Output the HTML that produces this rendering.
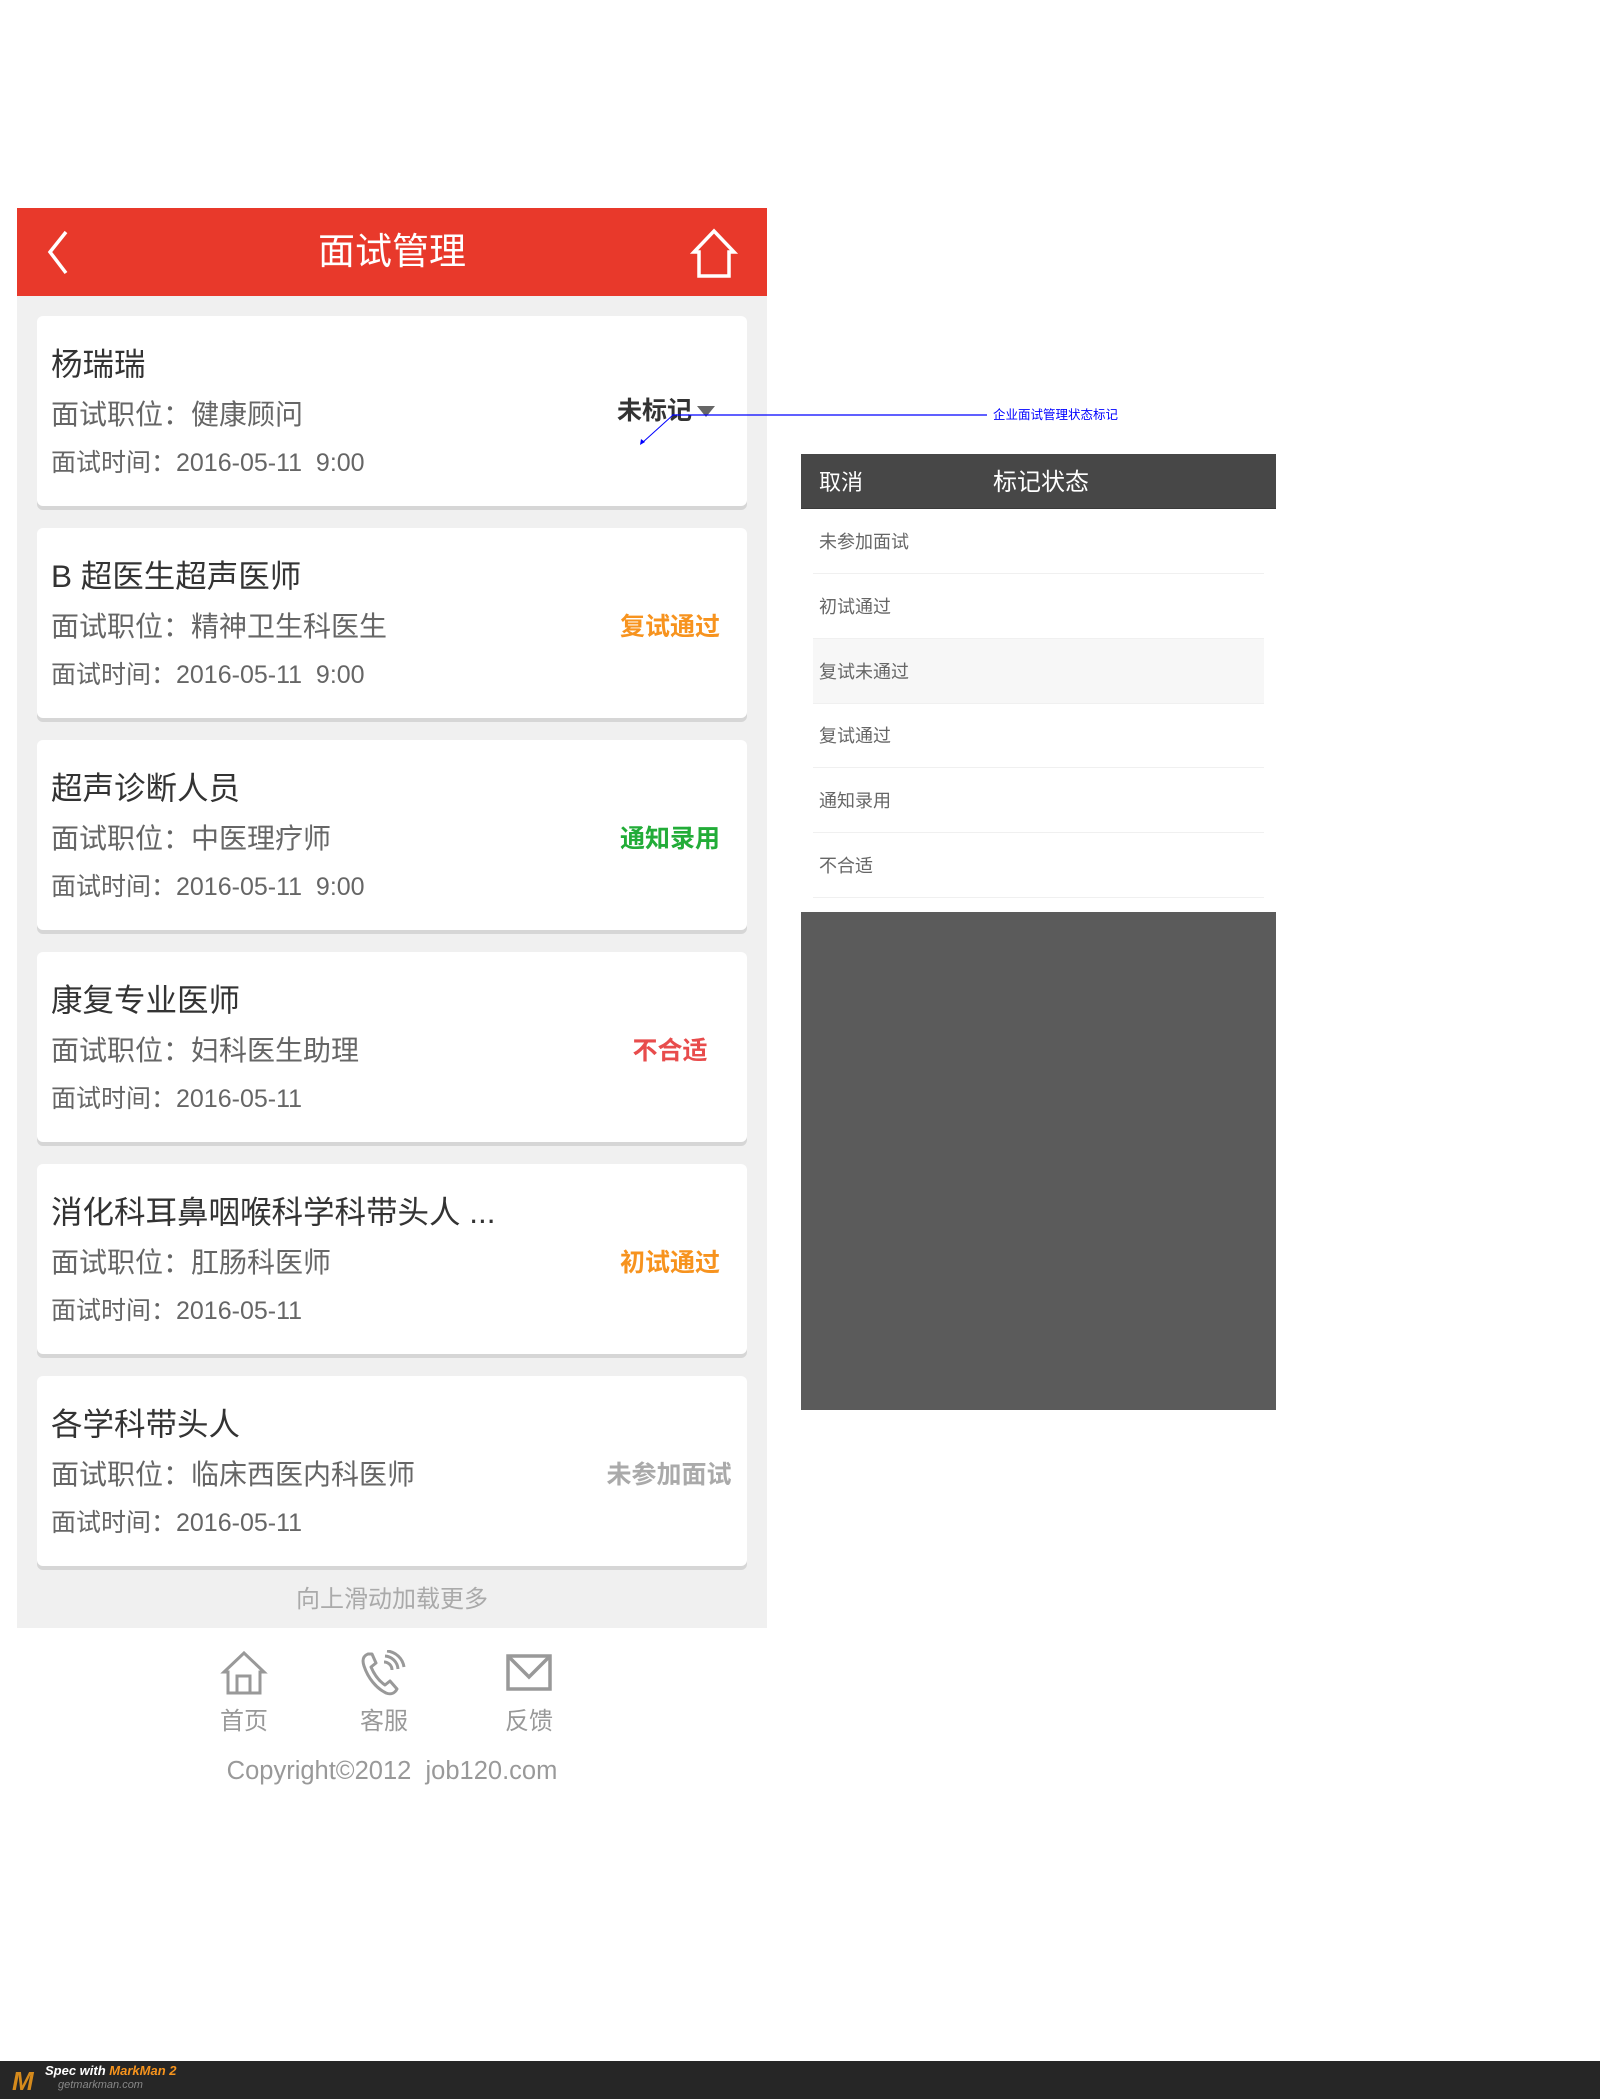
<!DOCTYPE html>
<html><head><meta charset="utf-8">
<style>
*{margin:0;padding:0;box-sizing:border-box}
body{width:1600px;height:2099px;background:#fff;position:relative;overflow:hidden;font-family:"Liberation Sans","Noto Sans CJK SC",sans-serif}
.abs{position:absolute}
.hdr{left:17px;top:208px;width:750px;height:88px;background:#e8392b}
.hdr .t{position:absolute;left:0;right:0;top:0;line-height:88px;text-align:center;color:#fff;font-size:37px}
.gray{left:17px;top:296px;width:750px;height:1332px;background:#f0f0f0}
.card{position:absolute;left:37px;width:710px;height:190px;background:#fff;border-radius:6px;box-shadow:0 4px 0 #d6d6d6}
.card .n{position:absolute;left:14px;top:28px;font-size:31.5px;color:#333;line-height:40px;white-space:nowrap}
.card .p{position:absolute;left:14px;top:81px;font-size:28px;color:#666;line-height:36px}
.card .d{position:absolute;left:14px;top:131px;font-size:25px;color:#666;line-height:32px}
.card .s{position:absolute;right:17px;width:120px;text-align:center;top:82px;font-size:25px;font-weight:bold;line-height:34px}
.row{position:absolute;left:813px;width:451px;height:65px;border-bottom:1px solid #f0f0f0;font-size:18px;color:#666;line-height:66px;padding-left:6px}
.ft{font-size:24px;color:#999;text-align:center;width:80px;position:absolute}
</style></head><body>
<div class="abs hdr">
<svg class="abs" style="left:25px;top:20px" width="40" height="50" viewBox="0 0 40 50"><path d="M24 4 L8 24 L24 45" fill="none" stroke="#fff" stroke-width="3.5"/></svg>
<div class="t">面试管理</div>
<svg class="abs" style="left:672px;top:20px" width="50" height="52" viewBox="0 0 50 52"><path d="M5 24 L25 3 L45 24 L40 24 L40 48 L10 48 L10 24 Z" fill="none" stroke="#fff" stroke-width="3.5" stroke-linejoin="miter"/></svg>
</div>
<div class="abs gray">
</div>
<div class="card" style="top:316px"><div class="n">杨瑞瑞</div><div class="p">面试职位：健康顾问</div><div class="d">面试时间：2016-05-11&nbsp; 9:00</div>
<div class="s" style="left:580px;right:auto;width:auto;top:78px;color:#333">未标记</div>
<svg class="abs" style="left:659px;top:88px" width="20" height="14"><path d="M1 2 L19 2 L10 13 Z" fill="#666"/></svg></div>
<div class="card" style="top:528px"><div class="n">B 超医生超声医师</div><div class="p">面试职位：精神卫生科医生</div><div class="d">面试时间：2016-05-11&nbsp; 9:00</div><div class="s" style="color:#f7931e">复试通过</div></div>
<div class="card" style="top:740px"><div class="n">超声诊断人员</div><div class="p">面试职位：中医理疗师</div><div class="d">面试时间：2016-05-11&nbsp; 9:00</div><div class="s" style="color:#22ac38">通知录用</div></div>
<div class="card" style="top:952px"><div class="n">康复专业医师</div><div class="p">面试职位：妇科医生助理</div><div class="d">面试时间：2016-05-11</div><div class="s" style="color:#e84c4c">不合适</div></div>
<div class="card" style="top:1164px"><div class="n">消化科耳鼻咽喉科学科带头人 ...</div><div class="p">面试职位：肛肠科医师</div><div class="d">面试时间：2016-05-11</div><div class="s" style="color:#f7931e">初试通过</div></div>
<div class="card" style="top:1376px"><div class="n">各学科带头人</div><div class="p">面试职位：临床西医内科医师</div><div class="d">面试时间：2016-05-11</div><div class="s" style="color:#aaa;width:140px;right:8px">未参加面试</div></div>
<div class="abs" style="left:17px;width:750px;top:1583px;text-align:center;font-size:24px;color:#aaa;line-height:34px">向上滑动加载更多</div>

<svg class="abs" style="left:220px;top:1650px" width="48" height="46" viewBox="0 0 48 46"><path d="M4 22 L24 3 L44 22 L40 22 L40 43 L8 43 L8 22 Z M17 43 L17 26 L30 26 L30 43" fill="none" stroke="#999" stroke-width="3"/></svg>
<svg class="abs" style="left:360px;top:1650px" width="48" height="46" viewBox="0 0 48 46"><path d="M8 4 C3 6 2 10 4 16 C8 28 16 38 26 43 C31 45 35 43 37 39 L30 31 L25 35 C19 31 14 24 11 17 L16 13 L12 4 Z" fill="none" stroke="#999" stroke-width="3" stroke-linejoin="round"/><path d="M24 12 A8 8 0 0 1 32 20 M25 6 A14 14 0 0 1 38 19 M27 1 A19 19 0 0 1 44 17" fill="none" stroke="#999" stroke-width="3"/></svg>
<svg class="abs" style="left:505px;top:1653px" width="48" height="40" viewBox="0 0 48 40"><rect x="3" y="3" width="42" height="33" fill="none" stroke="#999" stroke-width="3.5"/><path d="M4 4 L24 24 L44 4" fill="none" stroke="#999" stroke-width="3.5"/></svg>
<div class="ft" style="left:204px;top:1701px">首页</div>
<div class="ft" style="left:344px;top:1701px">客服</div>
<div class="ft" style="left:489px;top:1701px">反馈</div>
<div class="abs" style="left:17px;width:750px;top:1753px;text-align:center;font-size:25.5px;color:#999;line-height:36px">Copyright©2012&nbsp; job120.com</div>

<svg class="abs" style="left:630px;top:405px" width="370" height="45"><line x1="42" y1="10" x2="357" y2="10" stroke="#00f" stroke-width="1.3"/><line x1="43" y1="10" x2="12" y2="38" stroke="#00f" stroke-width="1"/><path d="M10 40 L11 34 L15 37 Z" fill="#00f"/></svg>
<div class="abs" style="left:993px;top:405px;font-size:12.5px;color:#00f;line-height:20px">企业面试管理状态标记</div>

<div class="abs" style="left:801px;top:454px;width:475px;height:55px;background:#474747;border-bottom:1px solid #3a3a3a"></div>
<div class="abs" style="left:819px;top:455px;line-height:55px;font-size:22px;color:#fff">取消</div>
<div class="abs" style="left:993px;top:455px;line-height:55px;font-size:24px;color:#fff">标记状态</div>
<div class="row" style="top:509px">未参加面试</div>
<div class="row" style="top:574px">初试通过</div>
<div class="row" style="top:639px;background:#f7f7f7">复试未通过</div>
<div class="row" style="top:703px">复试通过</div>
<div class="row" style="top:768px">通知录用</div>
<div class="row" style="top:833px">不合适</div>
<div class="abs" style="left:801px;top:912px;width:475px;height:498px;background:#5b5b5b"></div>

<div class="abs" style="left:0;top:2061px;width:1600px;height:38px;background:#262626"></div>
<div class="abs" style="left:12px;top:2066px;font-size:26px;font-weight:bold;color:#d58a1c;font-style:italic">M</div>
<div class="abs" style="left:45px;top:2063px;font-size:13px;font-weight:bold;font-style:italic;color:#fff">Spec with <span style="color:#f7941d">MarkMan 2</span></div>
<div class="abs" style="left:58px;top:2079px;font-size:11px;font-style:italic;color:#888">getmarkman.com</div>
</body></html>
